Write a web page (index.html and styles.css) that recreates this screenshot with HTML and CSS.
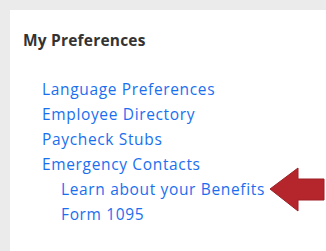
FILE: index.html
```html
<!DOCTYPE html>
<html lang="en">
<head>
    <meta charset="UTF-8">
    <meta name="viewport" content="width=device-width, initial-scale=1.0">
    <title>My Preferences</title>
    <link rel="stylesheet" href="styles.css">
</head>
<body>
    <div class="panel">
        <h3 class="panel-title">My Preferences</h3>
        <ul class="pref-list">
            <li><a href="#">Language Preferences</a></li>
            <li><a href="#">Employee Directory</a></li>
            <li><a href="#">Paycheck Stubs</a></li>
            <li><a href="#">Emergency Contacts</a>
                <ul class="sub-list">
                    <li class="highlight"><a href="#">Learn about your Benefits</a></li>
                    <li><a href="#">Form 1095</a></li>
                </ul>
            </li>
        </ul>
        <svg class="pointer" width="56" height="46" viewBox="0 0 56 46">
            <polygon points="1,22 29,1 29,12 55,12 55,33 29,33 29,44" fill="#b5262c" stroke="#9e1f24" stroke-width="1"/>
        </svg>
    </div>
</body>
</html>
```

FILE: styles.css
```css
body {
    margin: 0;
    padding: 10px 0 0 10px;
    background-color: #ebebeb;
    font-family: 'Open Sans', sans-serif;
}

.panel {
    position: relative;
    background-color: #fff;
    min-height: calc(100vh - 10px);
    padding: 19px 0 0 13px;
    box-sizing: border-box;
}

.panel-title {
    margin: 0 0 26px 0;
    font-size: 15.5px;
    font-weight: bold;
    color: #333;
    line-height: 22px;
    letter-spacing: 0.2px;
}

.pref-list {
    list-style: none;
    margin: 0;
    padding: 0 0 0 19px;
}

.pref-list li {
    line-height: 25px;
    font-size: 15.5px;
}

.pref-list a {
    color: #1a6ff0;
    text-decoration: none;
    letter-spacing: 0.65px;
}

.sub-list {
    list-style: none;
    margin: 0;
    padding: 0 0 0 19px;
}

.pointer {
    position: absolute;
    left: 259px;
    top: 157px;
}
```
